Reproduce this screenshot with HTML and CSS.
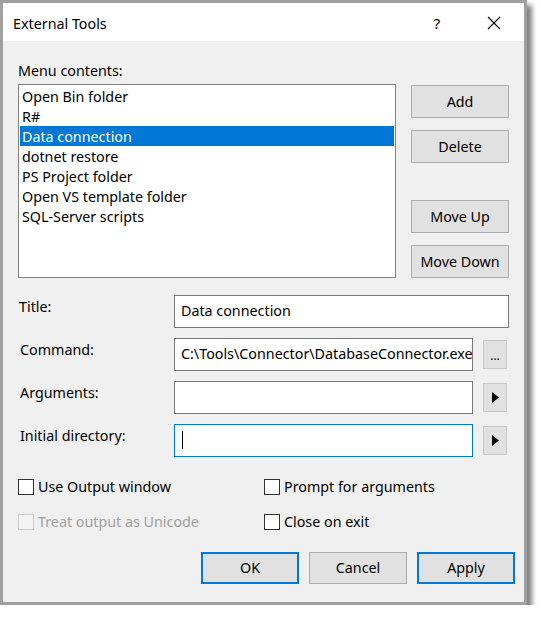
FILE: index.html
```html
<!DOCTYPE html>
<html>
<head>
<meta charset="utf-8">
<link rel="stylesheet" href="styles.css">
</head>
<body>
<div class="window">
  <div class="titlebar">
    <span class="title">External Tools</span>
    <span class="tb-btn help">?</span>
    <span class="tb-btn close">
      <svg width="14" height="14" viewBox="0 0 14 14"><path d="M1 1 L13 13 M13 1 L1 13" stroke="#000" stroke-width="1.1" fill="none"/></svg>
    </span>
  </div>
  <div class="body">
    <div class="menu-label">Menu contents:</div>
    <div class="top">
      <ul class="list">
        <li>Open Bin folder</li>
        <li>R#</li>
        <li class="selected">Data connection</li>
        <li>dotnet restore</li>
        <li>PS Project folder</li>
        <li>Open VS template folder</li>
        <li>SQL-Server scripts</li>
      </ul>
      <div class="side">
        <button class="btn side-btn">Add</button>
        <button class="btn side-btn">Delete</button>
        <div class="spacer"></div>
        <button class="btn side-btn">Move Up</button>
        <button class="btn side-btn">Move Down</button>
      </div>
    </div>
    <div class="form">
      <div class="flabel first">Title:</div>
      <div class="input wide">Data connection</div>

      <div class="flabel">Command:</div>
      <div class="input">C:\Tools\Connector\DatabaseConnector.exe</div>
      <button class="btn small ellipsis">...</button>

      <div class="flabel">Arguments:</div>
      <div class="input"></div>
      <button class="btn small"><svg width="7" height="11" viewBox="0 0 7 11"><polygon points="0,0 7,5.5 0,11" fill="#000"/></svg></button>

      <div class="flabel">Initial directory:</div>
      <div class="input focused"><span class="caret"></span></div>
      <button class="btn small"><svg width="7" height="11" viewBox="0 0 7 11"><polygon points="0,0 7,5.5 0,11" fill="#000"/></svg></button>
    </div>
    <div class="checks">
      <label class="check"><span class="box"></span>Use Output window</label>
      <label class="check"><span class="box"></span>Prompt for arguments</label>
      <label class="check disabled"><span class="box"></span>Treat output as Unicode</label>
      <label class="check"><span class="box"></span>Close on exit</label>
    </div>
    <div class="actions">
      <button class="btn action default">OK</button>
      <button class="btn action">Cancel</button>
      <button class="btn action default">Apply</button>
    </div>
  </div>
</div>
</body>
</html>
```
FILE: styles.css
```css
* { box-sizing: border-box; }

body {
  margin: 0;
  background: #ffffff;
  font-family: "Noto Sans", "Segoe UI", sans-serif;
  font-size: 14.3px;
  color: #000;
}

.window {
  width: 527px;
  height: 605px;
  border: 3px solid #a0a0a0;
  background: #f0f0f0;
  box-shadow: 5px 5px 5px rgba(0, 0, 0, 0.5);
  display: flex;
  flex-direction: column;
}

.titlebar {
  height: 38px;
  background: #ffffff;
  display: flex;
  align-items: center;
  padding-left: 10px;
  flex-shrink: 0;
}

.title {
  flex: 1;
  line-height: 20px;
  padding-top: 3px;
}

.tb-btn {
  width: 58px;
  height: 38px;
  display: flex;
  align-items: center;
  justify-content: center;
}

.help { font-size: 15px; padding-top: 1px; }
.close { padding-top: 2px; padding-right: 2px; }

.body {
  padding: 19px 9px 0 15px;
  display: flex;
  flex-direction: column;
}

.menu-label {
  line-height: 20px;
  height: 20px;
  padding-top: 1px;
}

.top {
  display: flex;
  gap: 15px;
  margin-top: 4px;
  margin-right: 6px;
}

.list {
  list-style: none;
  margin: 0;
  width: 378px;
  height: 194px;
  border: 1px solid #828282;
  background: #fff;
  padding: 1px;
}

.list li {
  height: 20px;
  line-height: 20px;
  padding-left: 2px;
  padding-top: 1px;
  white-space: nowrap;
}

.list li.selected {
  background: #0078d7;
  color: #fff;
}

.side {
  display: flex;
  flex-direction: column;
  padding-top: 1px;
  gap: 12px;
}

.spacer { flex: 1; }

.btn {
  font-family: inherit;
  font-size: inherit;
  color: #000;
  background: #e1e1e1;
  border: 1px solid #adadad;
  padding: 0;
  margin: 0;
  display: flex;
  align-items: center;
  justify-content: center;
}

.side-btn {
  width: 98px;
  height: 33px;
}

.form {
  display: grid;
  grid-template-columns: 156px 299px 10px 26px;
  grid-auto-rows: 33px;
  row-gap: 10px;
  margin-top: 17px;
  margin-right: 6px;
}

.flabel {
  grid-column: 1;
  line-height: 20px;
  margin-top: 2px;
  padding-left: 2px;
}

.flabel.first { padding-left: 1px; }

.input {
  grid-column: 2;
  background: #fff;
  border: 1px solid #7a7a7a;
  padding: 0 0 2px 6px;
  display: flex;
  align-items: center;
  white-space: nowrap;
  overflow: hidden;
}

.input.wide { grid-column: 2 / 5; }

.input.focused { border-color: #0078d7; }

.caret {
  display: inline-block;
  width: 1px;
  height: 18px;
  background: #000;
  margin-left: 1px;
}

.small {
  grid-column: 4;
  width: 24px;
  height: 29px;
  align-self: center;
  background: #e1e1e1;
  border: 1px solid #c9c9c9;
}

.ellipsis {
  font-size: 12px;
  align-items: flex-end;
  padding-bottom: 6px;
  line-height: 12px;
}

.checks {
  display: grid;
  grid-template-columns: 246px 1fr;
  row-gap: 15px;
  margin-top: 20px;
}

.check {
  display: flex;
  align-items: center;
  gap: 4px;
  line-height: 20px;
  height: 20px;
  white-space: nowrap;
}

.box {
  width: 16px;
  height: 16px;
  border: 1px solid #333;
  background: #fff;
  flex-shrink: 0;
}

.check.disabled { color: #a0a0a0; }
.check.disabled .box { border-color: #cccccc; background: #f4f4f4; }

.actions {
  display: flex;
  justify-content: flex-end;
  gap: 10px;
  margin-top: 20px;
}

.action {
  width: 98px;
  height: 32px;
  padding-bottom: 1px;
}

.action.default {
  border: 2px solid #0078d7;
}
```
